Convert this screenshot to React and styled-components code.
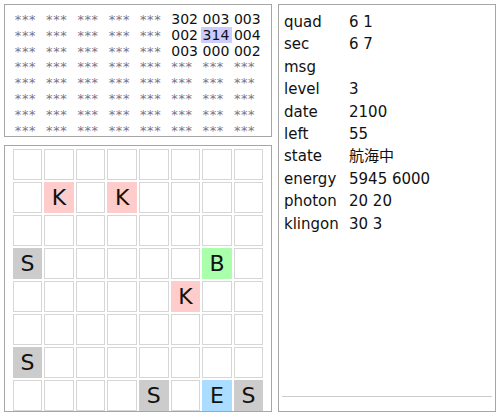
import React from 'react'
import styled, { createGlobalStyle } from 'styled-components'

const GlobalStyle = createGlobalStyle`
	html, body {
		margin: 0;
		padding: 0;
		background: #fff;
	}
	body {
		font-family: 'DejaVu Sans', 'Noto Sans CJK JP', sans-serif;
		color: #111;
	}
`

const near = [
	['302', '003', '003'],
	['002', '314', '004'],
	['003', '000', '002'],
]

const pieces = {
	'1-1': 'K', '1-3': 'K',
	'3-0': 'S', '3-6': 'B',
	'4-5': 'K',
	'6-0': 'S',
	'7-4': 'S', '7-6': 'E', '7-7': 'S',
}

const info = [
	['quad', '6 1'],
	['sec', '6 7'],
	['msg', ''],
	['level', '3'],
	['date', '2100'],
	['left', '55'],
	['state', '航海中'],
	['energy', '5945 6000'],
	['photon', '20 20'],
	['klingon', '30 3'],
]

const App = () => {
	const starCells = []
	for (let r = 0; r < 8; r++) {
		for (let c = 0; c < 8; c++) {
			const known = r < 3 && c >= 5
			starCells.push(
				<StarCell key={r + '-' + c} $known={known} $current={r === 1 && c === 6}>
					{known ? near[r][c - 5] : '***'}
				</StarCell>
			)
		}
	}

	const boardCells = []
	for (let r = 0; r < 8; r++) {
		for (let c = 0; c < 8; c++) {
			const p = pieces[r + '-' + c]
			boardCells.push(<Cell key={r + '-' + c} $kind={p}>{p}</Cell>)
		}
	}

	return (
		<>
			<GlobalStyle />
			<StyledPage>
				<StyledLeft>
					<StyledMapPanel>
						<StarGrid>{starCells}</StarGrid>
					</StyledMapPanel>
					<StyledBoardPanel>
						<Board>{boardCells}</Board>
					</StyledBoardPanel>
				</StyledLeft>
				<StyledInfoPanel>
					<InfoList>
						{info.map(([k, v]) => (
							<React.Fragment key={k}>
								<dt>{k}</dt>
								<dd>{v}</dd>
							</React.Fragment>
						))}
					</InfoList>
					<Rule />
				</StyledInfoPanel>
			</StyledPage>
		</>
	)
}

const pieceColors = {
	K: '#ffcccc',
	S: '#cccccc',
	B: '#aaffaa',
	E: '#aaddff',
}

const StyledPage = styled.div`
	box-sizing: border-box;
	height: 416px;
	padding: 4px;
	display: flex;
	gap: 6px;
`

const StyledLeft = styled.div`
	width: 268px;
	display: flex;
	flex-direction: column;
	gap: 8px;
`

const Panel = styled.div`
	box-sizing: border-box;
	border: 1px solid #a6a6a6;
	background: #fff;
`

const StyledMapPanel = styled(Panel)`
	height: 133px;
	padding-top: 6px;
	overflow: hidden;
`

const StarGrid = styled.div`
	display: grid;
	grid-template-columns: repeat(8, 31.3px);
	grid-auto-rows: 15.8px;
	justify-content: center;
	font-size: 14px;
	line-height: 17px;
`

const StarCell = styled.div`
	padding-left: 2px;
	white-space: nowrap;
	font-size: ${p => (p.$known ? '14px' : '13px')};
	color: ${p => (p.$known ? '#111' : '#7b7488')};
	background: ${p => (p.$current ? '#ccccff' : 'transparent')};
	letter-spacing: ${p => (p.$known ? '0' : '0.6px')};
`

const StyledBoardPanel = styled(Panel)`
	flex: 1;
	padding-top: 3px;
	overflow: hidden;
`

const Board = styled.div`
	display: grid;
	grid-template-columns: repeat(8, 29.6px);
	grid-auto-rows: 31px;
	gap: 2px 2px;
	justify-content: center;
`

const Cell = styled.div`
	box-sizing: border-box;
	border: 1px solid ${p => (p.$kind ? pieceColors[p.$kind] : '#d6d6d6')};
	background: ${p => (p.$kind ? pieceColors[p.$kind] : '#fff')};
	display: flex;
	align-items: center;
	justify-content: center;
	font-size: 22px;
	line-height: 1;
	color: #111;
`

const StyledInfoPanel = styled(Panel)`
	flex: 1;
	display: flex;
	flex-direction: column;
	padding: 6px 3px 14px;
`

const InfoList = styled.dl`
	margin: 0;
	padding: 0 2px;
	display: grid;
	grid-template-columns: 65px 1fr;
	font-size: 15px;
	line-height: 22.4px;
	flex: 1;
	align-content: start;
	dt, dd {
		margin: 0;
		min-height: 22.4px;
	}
`

const Rule = styled.div`
	border-top: 1px solid #cccccc;
`

export default App
